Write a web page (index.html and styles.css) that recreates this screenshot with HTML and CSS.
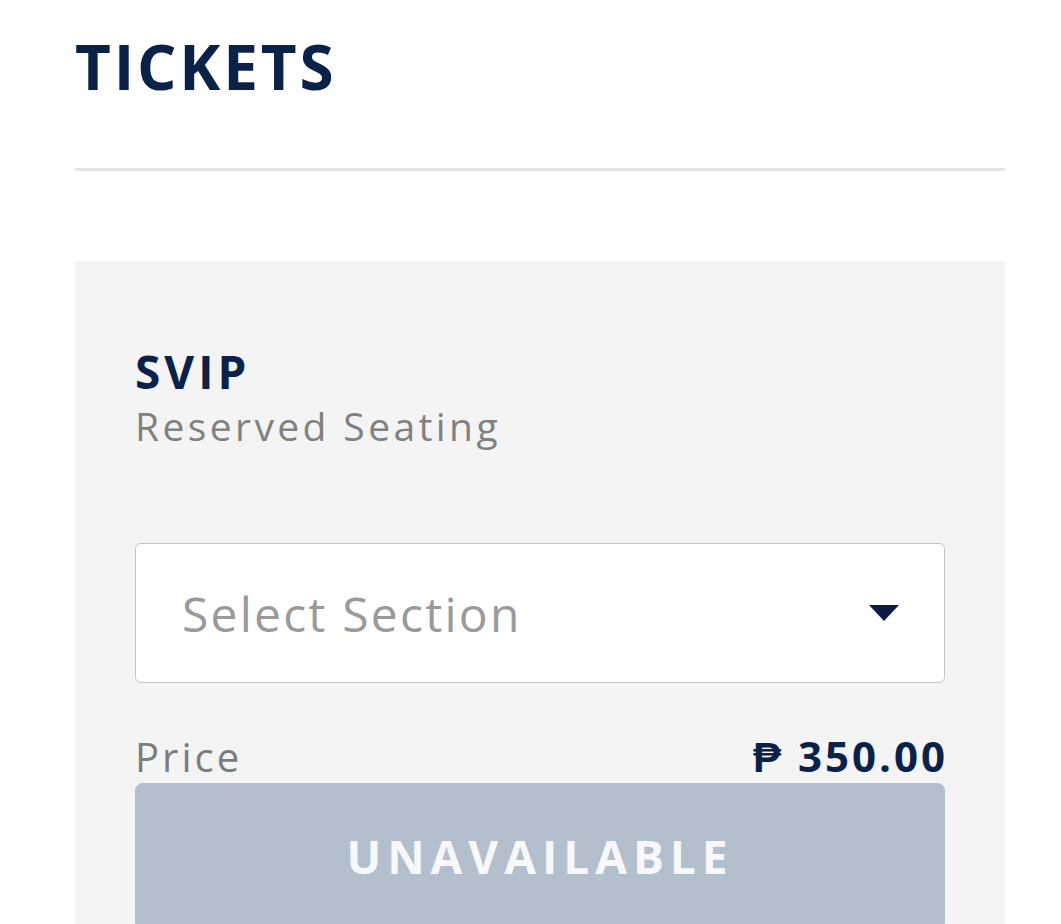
FILE: index.html
```html
<!DOCTYPE html>
<html>
<head>
<meta charset="utf-8">
<link rel="stylesheet" href="styles.css">
</head>
<body>
<main class="page">
  <h1 class="title">TICKETS</h1>
  <hr class="divider">
  <section class="card">
    <div class="tier">SVIP</div>
    <div class="tier-sub">Reserved Seating</div>
    <div class="select">
      <span class="select-text">Select Section</span>
      <svg class="caret" width="30" height="16" viewBox="0 0 30 16"><polygon points="0,0 30,0 15,16" fill="#0c1a46"/></svg>
    </div>
    <div class="price-row">
      <span class="price-label">Price</span>
      <span class="price-value">₱ 350.00</span>
    </div>
    <button class="btn">UNAVAILABLE</button>
  </section>
</main>
</body>
</html>
```

FILE: styles.css
```css
html, body {
  margin: 0;
  padding: 0;
  background: #ffffff;
}
body {
  font-family: "Open Sans", "Liberation Sans", sans-serif;
}
.page {
  padding: 0 56px 0 75px;
}
.title {
  margin: 0;
  padding-top: 26px;
  font-size: 62px;
  line-height: 80px;
  font-weight: 700;
  color: #0b2248;
  letter-spacing: 2.8px;
}
.divider {
  margin: 62px 0 0 0;
  border: 0;
  height: 3px;
  background: #e3e3e5;
}
.card {
  margin-top: 90px;
  background: #f4f4f4;
  padding: 80px 60px 40px 60px;
  height: 700px;
}
.tier {
  font-size: 46px;
  line-height: 60px;
  font-weight: 700;
  color: #0b2248;
  letter-spacing: 4px;
}
.tier-sub {
  font-size: 39px;
  line-height: 50px;
  font-weight: 400;
  color: #818181;
  letter-spacing: 3.4px;
}
.select {
  margin-top: 92px;
  height: 138px;
  background: #fff;
  border: 1px solid #c4c4c4;
  border-radius: 6px;
  display: flex;
  align-items: center;
  justify-content: space-between;
  padding: 0 45px 0 46px;
}
.select-text {
  font-size: 48px;
  color: #9a9a9a;
  font-weight: 400;
  letter-spacing: 2.2px;
}
.caret {
  display: block;
}
.price-row {
  display: flex;
  justify-content: space-between;
  align-items: baseline;
  margin-top: 46px;
  height: 54px;
}
.price-label {
  font-size: 40px;
  color: #7c7c7c;
  line-height: 54px;
  letter-spacing: 3px;
}
.price-value {
  font-size: 42px;
  font-weight: 700;
  color: #0b2248;
  line-height: 54px;
  letter-spacing: 3px;
  margin-right: -3px;
}
.btn {
  display: block;
  width: 100%;
  height: 146px;
  border: 0;
  border-radius: 8px;
  background: #b4bfcd;
  color: #f7f8fa;
  font-family: "Open Sans", "Liberation Sans", sans-serif;
  font-size: 46px;
  font-weight: 700;
  letter-spacing: 6px;
  padding: 0;
}
```
